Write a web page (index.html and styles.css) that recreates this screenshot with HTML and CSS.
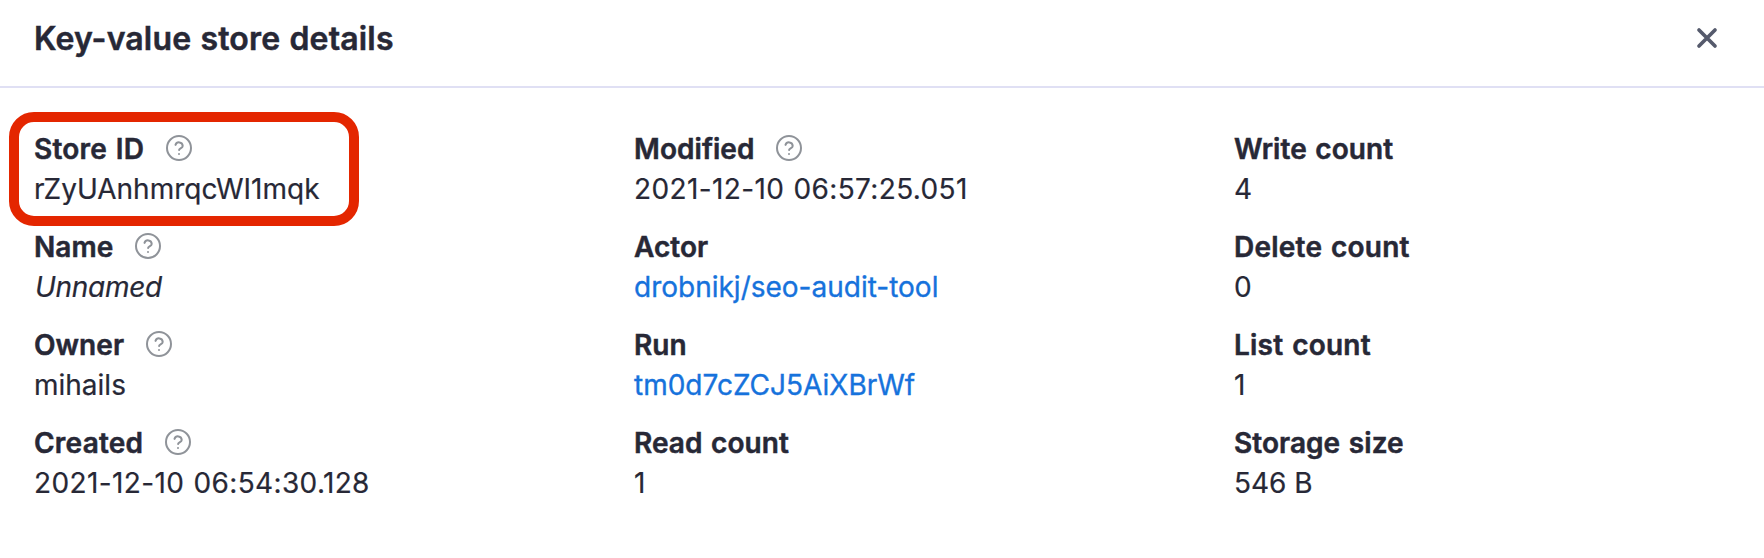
FILE: index.html
```html
<!DOCTYPE html>
<html lang="en">
<head>
<meta charset="utf-8">
<title>Key-value store details</title>
<link rel="stylesheet" href="styles.css">
</head>
<body>
<svg class="defs" aria-hidden="true"><symbol id="help" viewBox="0 0 26 26"><circle cx="13" cy="13" r="12"/><path d="M9.5 9.9a3.7 3.7 0 0 1 7.2 1c0 2.4-3.6 2.6-3.6 4.1"/><path d="M13 18.9v.1"/></symbol></svg>
<section class="dialog">
  <header class="header">
    <h1 class="title">Key-value store details</h1>
    <svg class="close" viewBox="0 0 24 24"><path d="M4 4l16 16M20 4L4 20"/></svg>
  </header>
  <div class="details">
    <div class="column">
      <div class="item highlighted"><div class="label spaced">Store ID<svg class="help"><use href="#help"/></svg></div><div class="value">rZyUAnhmrqcWI1mqk</div></div>
      <div class="item"><div class="label">Name<svg class="help"><use href="#help"/></svg></div><div class="value unnamed">Unnamed</div></div>
      <div class="item"><div class="label">Owner<svg class="help"><use href="#help"/></svg></div><div class="value">mihails</div></div>
      <div class="item"><div class="label spaced">Created<svg class="help"><use href="#help"/></svg></div><div class="value date">2021-12-10 06:54:30.128</div></div>
    </div>
    <div class="column">
      <div class="item"><div class="label">Modified<svg class="help"><use href="#help"/></svg></div><div class="value date">2021-12-10 06:57:25.051</div></div>
      <div class="item"><div class="label">Actor</div><a class="value link">drobnikj/seo-audit-tool</a></div>
      <div class="item"><div class="label">Run</div><a class="value link">tm0d7cZCJ5AiXBrWf</a></div>
      <div class="item"><div class="label">Read count</div><div class="value">1</div></div>
    </div>
    <div class="column">
      <div class="item"><div class="label">Write count</div><div class="value">4</div></div>
      <div class="item"><div class="label spaced">Delete count</div><div class="value">0</div></div>
      <div class="item"><div class="label spaced">List count</div><div class="value">1</div></div>
      <div class="item"><div class="label">Storage size</div><div class="value">546 B</div></div>
    </div>
  </div>
</section>
</body>
</html>
```

FILE: styles.css
```css
*, *::after { box-sizing: border-box; }
body { margin: 0; background: #fff; color: #272836; font-family: Inter, sans-serif; font-size: 28px; line-height: 40px; }
.defs { position: absolute; width: 0; height: 0; }
.dialog { height: 558px; overflow: hidden; }
.header { display: flex; align-items: center; justify-content: space-between; height: 88px; padding: 0 45px 10px 34px; border-bottom: 2px solid #e0e0f4; }
.title { margin: 2px 0 0; font-size: 32px; font-weight: 640; letter-spacing: 0.16px; word-spacing: 1px; -webkit-text-stroke: 0.5px; }
.close { width: 24px; height: 24px; fill: none; stroke: #555a6c; stroke-width: 3.7; stroke-linecap: round; }
.details { display: grid; grid-template-columns: repeat(3, 600px); padding: 41px 34px 0; }
.column { display: flex; flex-direction: column; gap: 18px; }
.item { position: relative; height: 80px; }
.label { display: flex; align-items: center; height: 40px; font-weight: 640; letter-spacing: 0.05px; word-spacing: 1.5px; -webkit-text-stroke: 0.5px; }
.spaced { letter-spacing: 0.23px; }
.value { display: block; height: 40px; white-space: nowrap; -webkit-text-stroke: 0.2px; }
.date { letter-spacing: 0.37px; word-spacing: 1px; }
.unnamed { padding-left: 1px; font-style: italic; letter-spacing: -0.3px; }
.link { color: #1672dc; -webkit-text-stroke: 0.35px; }
.help { width: 26px; height: 26px; margin-left: 21.5px; margin-top: -2px; fill: none; stroke: #8f9399; stroke-width: 2; stroke-linecap: round; stroke-linejoin: round; }
.highlighted::after { content: ""; position: absolute; left: -25px; top: -17px; width: 350px; height: 114px; border: 10px solid #e42600; border-radius: 25px; }
```
